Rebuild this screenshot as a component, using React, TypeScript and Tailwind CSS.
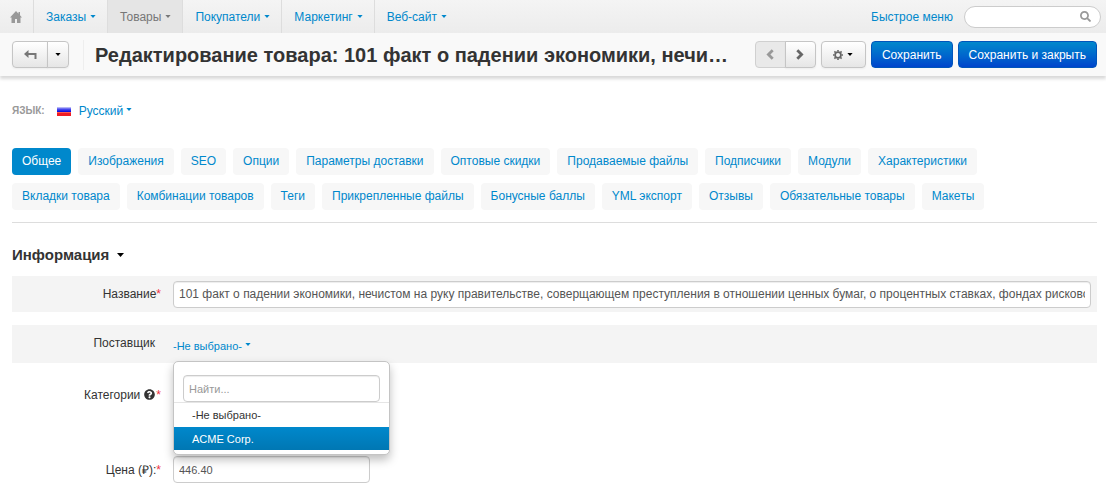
import { useState } from "react";
import { FaSearch, FaQuestionCircle } from "react-icons/fa";
import clsx from "clsx";

const navItems = [
  { label: "Заказы", active: false },
  { label: "Товары", active: true },
  { label: "Покупатели", active: false },
  { label: "Маркетинг", active: false },
  { label: "Веб-сайт", active: false },
];

const tabRows = [
  [
    "Общее",
    "Изображения",
    "SEO",
    "Опции",
    "Параметры доставки",
    "Оптовые скидки",
    "Продаваемые файлы",
    "Подписчики",
    "Модули",
    "Характеристики",
  ],
  [
    "Вкладки товара",
    "Комбинации товаров",
    "Теги",
    "Прикрепленные файлы",
    "Бонусные баллы",
    "YML экспорт",
    "Отзывы",
    "Обязательные товары",
    "Макеты",
  ],
];

const vendors = ["-Не выбрано-", "ACME Corp."];

const productName =
  "101 факт о падении экономики, нечистом на руку правительстве, соверщающем преступления в отношении ценных бумаг, о процентных ставках, фондах рискового инвестирования";

const shortName = productName.length > 34 ? `${productName.slice(0, 34)}…` : productName;

const grayButton =
  "flex items-center justify-center border border-[#c5c5c5] bg-linear-to-b from-white to-[#e6e6e6] shadow-[0_1px_2px_rgba(0,0,0,0.05)]";
const blueButton =
  "h-[27px] rounded border border-[#0055bb] bg-linear-to-b from-[#0088cc] to-[#0044cc] px-[10px] text-white";
const textInput =
  "h-[27px] rounded border border-[#cccccc] bg-white px-[5px] text-[#555555] shadow-[inset_0_1px_1px_rgba(0,0,0,0.075)] outline-none";

function Caret({ className }: { className?: string }) {
  return (
    <svg viewBox="0 0 7 4" className={clsx("shrink-0 fill-current", className)} aria-hidden="true">
      <path d="M0 0h7L3.5 4z" />
    </svg>
  );
}

function Chevron({ flip }: { flip?: boolean }) {
  return (
    <svg viewBox="0 0 8 11" className="h-[11px] w-2" fill="none" stroke="currentColor" strokeWidth="2.8" aria-hidden="true">
      <path d={flip ? "M1.3 1.2L5.6 5.5L1.3 9.8" : "M6.7 1.2L2.4 5.5L6.7 9.8"} />
    </svg>
  );
}

function Gear() {
  return (
    <svg viewBox="0 0 10 10" className="size-[10px]" fill="none" stroke="currentColor" aria-hidden="true">
      <circle cx="5" cy="5" r="2.9" strokeWidth="1.7" />
      <path strokeWidth="1.6" d="M5 0v1.5M5 8.500V10M0 5h1.500M8.500 5H10M1.400 1.400l1.100 1.100M7.500 7.500l1.100 1.100M8.600 1.400L7.500 2.500M2.500 7.500L1.400 8.600" />
    </svg>
  );
}

function RussianFlag() {
  return (
    <svg viewBox="0 0 14 9" className="h-[9px] w-[14px]" aria-hidden="true">
      <defs>
        <linearGradient id="flag-blue" x1="0" y1="0" x2="0" y2="1">
          <stop offset="0" stopColor="#d8d8f8" />
          <stop offset="0.4" stopColor="#5050f0" />
          <stop offset="1" stopColor="#0505d8" />
        </linearGradient>
      </defs>
      <path d="M0 0h14v5H0z" fill="url(#flag-blue)" />
      <path d="M0 5h14v4H0z" fill="#f01c24" />
      <path d="M0 5h14v1H0z" fill="#ff5a50" />
    </svg>
  );
}

function Required() {
  return <span className="text-[#ee3344]">*</span>;
}

function TopNav() {
  return (
    <nav className="flex h-[33px] items-stretch bg-linear-to-b from-[#f4f4f4] to-[#ececec] text-[#0088cc]">
      <a href="#home" aria-label="Главная" className="flex w-[34px] items-center justify-center border-r border-[#dddddd] pr-[2px] text-[#999999]">
        <svg viewBox="0 0 12 12" className="size-3" fill="currentColor" aria-hidden="true">
          <path d="M6 0L0 6.500h1.500V12H5V8h2v4h3.500V6.500H12L10 4.300V1H8.500v1.700z" />
        </svg>
      </a>
      {navItems.map((item) => (
        <a
          key={item.label}
          href="#menu"
          className={clsx(
            "flex items-center gap-1 border-r border-[#dddddd] pr-[11px] pl-3 last-of-type:border-r-0",
            item.active && "bg-[#e5e5e5] text-[#777777]"
          )}
        >
          {item.label}
          <Caret className="h-[3px] w-[6px]" />
        </a>
      ))}
      <div className="ml-auto flex items-center gap-[11px] pr-[5px]">
        <a href="#quick">Быстрое меню</a>
        <label className="flex h-[22px] w-[137px] items-center rounded-full border border-[#cccccc] bg-white pr-[9px] pl-3">
          <input type="search" aria-label="Поиск" className="w-full min-w-0 outline-none" />
          <FaSearch className="size-[11px] shrink-0 text-[#999999]" />
        </label>
      </div>
    </nav>
  );
}

function ActionBar() {
  return (
    <header className="flex h-[43px] items-center bg-[#f9f9f9] pr-[9px] pl-3 shadow-[0_3px_3px_rgba(0,0,0,0.15)]">
      <div className="flex text-[#777777]">
        <button type="button" aria-label="Назад" className={clsx(grayButton, "h-[27px] w-9 rounded-l")}>
          <svg viewBox="0 0 13 10" className="h-[10px] w-[13px]" fill="currentColor" aria-hidden="true">
            <path d="M0 4L4.500 0v3H12.500v6H10.500V5H4.500v3z" />
          </svg>
        </button>
        <button type="button" aria-label="Ещё" className={clsx(grayButton, "-ml-px h-[27px] w-[22px] rounded-r text-black")}>
          <Caret className="h-[3px] w-[6px]" />
        </button>
      </div>
      <h1 className="ml-[14px] min-w-0 flex-1 truncate border-l border-[#eeeeee] pl-[11px] text-[20px] leading-[30px] font-bold text-[#333333]">
        Редактирование товара: {shortName}
      </h1>
      <div className="flex shrink-0 gap-[5px]">
        <div className="flex text-[#666666]">
          <button type="button" aria-label="Предыдущий" className="flex h-[27px] w-[31px] items-center justify-center rounded-l border border-[#d0d0d0] bg-[#e9e9e9] text-[#999999]">
            <Chevron />
          </button>
          <button type="button" aria-label="Следующий" className={clsx(grayButton, "-ml-px h-[27px] w-[31px] rounded-r")}>
            <Chevron flip />
          </button>
        </div>
        <button type="button" aria-label="Настройки" className={clsx(grayButton, "h-[27px] w-[45px] gap-1 rounded text-[#666666]")}>
          <Gear />
          <Caret className="h-[3px] w-[6px] text-black" />
        </button>
        <button type="button" className={blueButton}>Сохранить</button>
        <button type="button" className={blueButton}>Сохранить и закрыть</button>
      </div>
    </header>
  );
}

function VendorPicker() {
  const [selected, setSelected] = useState(vendors[0]);
  const [open, setOpen] = useState(true);

  return (
    <div className="relative text-[11px]">
      <button type="button" aria-expanded={open} onClick={() => setOpen(!open)} className="mt-[3px] flex items-start gap-[3px] text-[#0088cc]">
        {selected}
        <Caret className="mt-[6px] h-[3px] w-[6px]" />
      </button>
      {open && (
        <div className="absolute top-6 left-0 z-10 w-[217px] rounded-[5px] border border-[#c4c4c4] bg-white pt-[13px] pb-1 shadow-[0_5px_10px_rgba(0,0,0,0.25)]">
          <div className="border-b border-[#e5e5e5] px-[9px]">
            <input type="text" placeholder="Найти..." aria-label="Найти" className={clsx(textInput, "block w-full placeholder:text-[#999999]")} />
          </div>
          <ul>
            {vendors.map((vendor) => (
              <li key={vendor}>
                <button
                  type="button"
                  onClick={() => setSelected(vendor)}
                  className={clsx(
                    "block w-full px-[18px] text-left",
                    vendor === "ACME Corp." ? "h-[23px] bg-linear-to-b from-[#0088cc] to-[#0077b3] text-white" : "h-6 text-[#333333]"
                  )}
                >
                  {vendor}
                </button>
              </li>
            ))}
          </ul>
        </div>
      )}
    </div>
  );
}

export default function App() {
  return (
    <div className="bg-white font-['Liberation_Sans',Arial,sans-serif] text-[12px] leading-[18px] text-[#333333]">
      <TopNav />
      <ActionBar />

      <main className="pr-[9px] pb-[11px] pl-3">
        <div className="mt-[26px] flex items-center">
          <span className="mr-3 text-[10px] font-bold text-[#999999]">ЯЗЫК:</span>
          <RussianFlag />
          <button type="button" className="ml-2 flex items-start gap-[3px] text-[#0088cc]">
            Русский
            <Caret className="mt-[6px] h-[3px] w-[6px]" />
          </button>
        </div>

        <div className="mt-7 flex flex-col gap-2 border-b border-[#dddddd] pb-3">
          {tabRows.map((row) => (
            <div key={row[0]} className="flex flex-wrap gap-[7px]">
              {row.map((tab) => (
                <a
                  key={tab}
                  href="#tab"
                  className={clsx(
                    "rounded px-[10px] pt-1 pb-[5px]",
                    tab === "Общее" ? "bg-[#0088cc] text-white" : "bg-[#f7f7f7] text-[#0088cc]"
                  )}
                >
                  {tab}
                </a>
              ))}
            </div>
          ))}
        </div>

        <h2 className="mt-[22px] flex items-center gap-2 text-[15px] leading-5 font-bold">
          Информация
          <Caret className="h-1 w-[7px] text-black" />
        </h2>

        <form className="mt-[11px]">
          <div className="flex h-9 items-center bg-[#f4f4f4] pr-[6px]">
            <label htmlFor="name" className="w-[149px] shrink-0 text-right">
              Название
              <Required />
            </label>
            <input id="name" type="text" defaultValue={productName} className={clsx(textInput, "ml-3 min-w-0 flex-1")} />
          </div>

          <div className="mt-[13px] flex h-[38px] bg-[#f4f4f4] pt-[9px]">
            <span className="w-[143px] shrink-0 text-right">Поставщик</span>
            <div className="ml-[18px]">
              <VendorPicker />
            </div>
          </div>

          <div className="mt-[18px] flex h-[27px] items-center">
            <label htmlFor="category" className="flex w-[149px] shrink-0 items-center justify-end">
              Категории
              <FaQuestionCircle className="mr-px ml-1 size-[11px]" />
              <Required />
            </label>
            <input id="category" type="text" className={clsx(textInput, "ml-3 w-[197px]")} />
          </div>

          <div className="mt-12 flex h-[27px] items-center">
            <label htmlFor="price" className="w-[149px] shrink-0 text-right">
              Цена (₽):
              <Required />
            </label>
            <input id="price" type="text" defaultValue="446.40" className={clsx(textInput, "ml-3 w-[197px] text-[11px]")} />
          </div>
        </form>
      </main>
    </div>
  );
}
